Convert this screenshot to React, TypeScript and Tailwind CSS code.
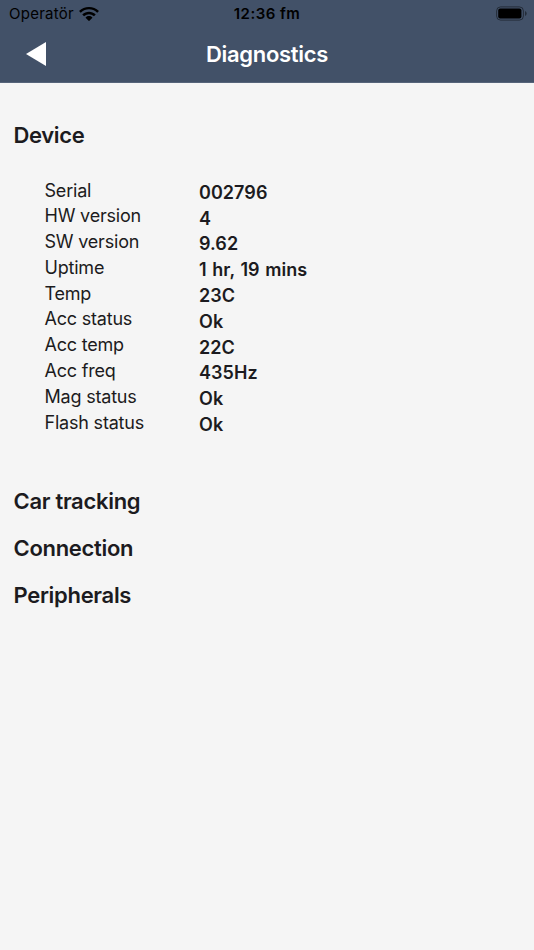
const rows = [
  ["Serial", "002796"],
  ["HW version", "4"],
  ["SW version", "9.62"],
  ["Uptime", "1 hr, 19 mins"],
  ["Temp", "23C"],
  ["Acc status", "Ok"],
  ["Acc temp", "22C"],
  ["Acc freq", "435Hz"],
  ["Mag status", "Ok"],
  ["Flash status", "Ok"],
];

function Wifi() {
  return (
    <svg width="20" height="14" viewBox="0 0 20 14" fill="black">
      <path d="M10 0C6.200 0 2.700 1.400 .3 3.700Q0 4 .3 4.300L1.500 5.500Q1.800 5.800 2.100 5.500A11.400 11.400 0 0 1 17.900 5.500Q18.200 5.800 18.500 5.500L19.700 4.300Q20 4 19.700 3.700C17.300 1.400 13.800 0 10 0Z" />
      <path d="M10 4.700C7.500 4.700 5.200 5.600 3.500 7.200Q3.200 7.500 3.500 7.800L4.800 9Q5.100 9.300 5.400 9A6.800 6.800 0 0 1 14.600 9Q14.900 9.300 15.200 9L16.500 7.800Q16.800 7.500 16.500 7.200C14.800 5.600 12.500 4.700 10 4.700Z" />
      <path d="M10 9.100C8.700 9.100 7.600 9.600 6.800 10.300Q6.500 10.600 6.800 10.900L9.600 13.700Q10 14.100 10.400 13.700L13.200 10.900Q13.500 10.600 13.200 10.300C12.400 9.600 11.300 9.100 10 9.100Z" />
    </svg>
  );
}

export default function App() {
  return (
    <div className="min-h-[950px] bg-[#f5f5f5] text-[#1c1b20] font-[Inter,sans-serif]">
      <header className="h-[83px] bg-[#425168] border-b border-[#56647a]">
        <div className="grid h-[27px] grid-cols-3 items-center text-[15px] leading-[27px] text-black">
          <div className="flex items-center gap-[5px] pl-[9px]"><span className="tracking-[0.25px]">Operatör</span><Wifi /></div>
          <div className="text-center font-[560] tracking-[0.45px]">12:36 fm</div>
          <div className="flex justify-end pr-[6px]">
            <svg width="32" height="15" viewBox="0 0 32 15">
              <rect x=".6" y=".9" width="26.800" height="13.200" rx="4" fill="none" stroke="black" strokeOpacity=".45" />
              <rect x="2.200" y="2.500" width="23.200" height="10" rx="2" />
              <path d="M29 5Q30.700 5.700 30.700 7.500T29 10Z" fillOpacity=".45" />
            </svg>
          </div>
        </div>
        <div className="grid h-[54px] grid-cols-3 items-center text-white">
          <svg className="ml-[26px]" width="20" height="24" viewBox="0 0 20 24" fill="white"><path d="M20 0V24L0 12Z" /></svg>
          <h1 className="text-center text-[22px] font-[560] tracking-[-0.3px]">Diagnostics</h1>
        </div>
      </header>
      <main className="pl-[13.500px] pt-[37px]">
        <h2 className="h-[30px] text-[22px] leading-[30px] font-[560] tracking-[-0.35px]">Device</h2>
        <dl className="ml-[31px] mt-[27.500px] text-[18px] leading-[26px]">
          {rows.map(([label, value]) => (
            <div className="flex h-[25.800px]" key={label}>
              <dt className="w-[154.500px] tracking-[-0.2px]">{label}</dt>
              <dd className="pt-[2.400px] font-[560] tracking-[0.05px] [word-spacing:1px]">{value}</dd>
            </div>
          ))}
        </dl>
        <div className="mt-[42.500px] text-[22px] leading-[47px] font-[560] tracking-[-0.3px]">
          <h2>Car tracking</h2><h2>Connection</h2><h2>Peripherals</h2>
        </div>
      </main>
    </div>
  );
}
